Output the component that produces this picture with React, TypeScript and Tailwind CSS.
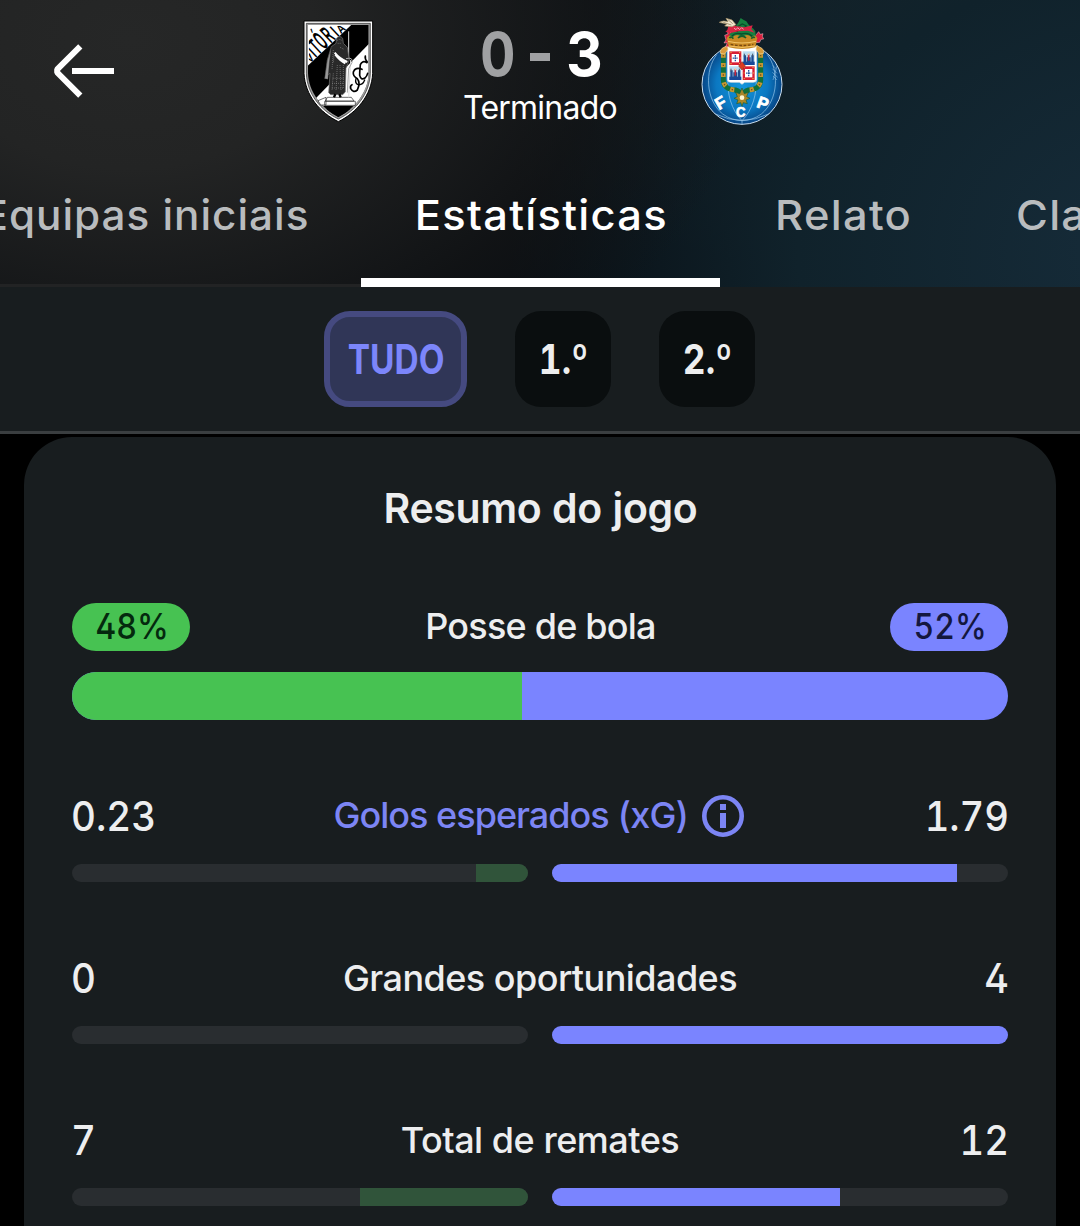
import type { ReactNode } from "react";

function BackArrow() {
  return (
    <svg className="block h-[60px] w-[66px]" viewBox="50 41 66 60" fill="none" stroke="#fff" strokeWidth="6">
      <path d="M80.3 46.3 57.200 69.3v3.2l23.100 23.2" strokeLinejoin="bevel" />
      <path d="M72 71h42" />
    </svg>
  );
}

const crestLetters = [
  { c: "V", x: 60, y: 160, h: 1.3 },
  { c: "I", x: 77, y: 144, h: 2.1 },
  { c: "T", x: 86, y: 136, h: 2.9 },
  { c: "Ó", x: 102, y: 121, h: 3.2 },
  { c: "R", x: 123, y: 101, h: 3 },
  { c: "I", x: 144, y: 82, h: 2.2 },
  { c: "A", x: 153, y: 73, h: 1.4 },
];

function VitoriaCrest() {
  return (
    <svg className="block h-[120px] w-[100px] shrink-0" viewBox="0 0 300 360">
      <defs>
        <clipPath id="vit-inner">
          <path d="M54 45H236V190C234 248 194 296 145 321C96 296 56 248 54 190Z" />
        </clipPath>
        <clipPath id="vit-corner">
          <path d="M56 47H183L56 165Z" />
        </clipPath>
      </defs>
      <path d="M42 33H248V190C245 256 200 308 145 335C90 308 45 256 42 190Z" fill="#fff" stroke="#000" strokeWidth="3" />
      <path d="M49 40H241V190C239 252 197 302 145 327C93 302 51 252 49 190Z" fill="#999" stroke="#222" strokeWidth="2" />
      <g clipPath="url(#vit-inner)">
        <path d="M50 40H240V330H50Z" fill="#000" />
        <path d="M50 40H189L50 170Z" fill="#fff" />
        <path d="M240 98L76 266L104 296H190L250 230Z" fill="#fff" />
        <g clipPath="url(#vit-corner)" fontFamily="Liberation Sans" fontWeight="700" fontSize="26" fill="#000">
          {crestLetters.map((l, i) => (
            <text key={i} transform={`translate(${l.x} ${l.y}) rotate(-43) scale(1.15 ${l.h})`}>
              {l.c}
            </text>
          ))}
        </g>
        <path d="M92 287H202L145 330Z" fill="#000" />
      </g>
      <path d="M84 272L108 262V285H92ZM112 262H184L192 273H106ZM104 274H196V286H104Z" fill="#fff" stroke="#222" strokeWidth="2" />
      <path d="M176 64V150M182 150L176 262" stroke="#ddd" strokeWidth="3" />
      <path d="M140 84Q149 74 158 85L160 100L172 112L178 150L168 175L166 246L158 254H122L116 248L120 190L112 196L105 205L112 150L124 110L138 100Z" fill="#292929" stroke="#777" strokeWidth="2" />
      <path d="M124 112L112 150L104 206L114 208L118 160Z" fill="#999" stroke="#222" strokeWidth="1" />
      <path d="M141 92q7 -7 15 0M143 100h11M130 120l-4 60M142 165l-4 78M150 165l3 78M130 190l-4 50M160 165l0 70M128 205h34M126 220h36M126 234h36M132 136l-2 24M150 112l12 6" stroke="#8a8a8a" strokeWidth="2" strokeDasharray="3 3" fill="none" />
      <path d="M134 128Q148 146 172 156M136 134Q150 152 166 160" stroke="#fff" strokeWidth="6" fill="none" />
      <path d="M168 146Q190 140 186 158L176 176L172 248" stroke="#aaa" strokeWidth="3" fill="none" />
      <path d="M136 252l-4 10M148 252l4 10" stroke="#000" strokeWidth="7" />
      <g fill="none" stroke="#000" strokeWidth="5" strokeLinecap="round">
        <path d="M226 138q-2 10 6 18M231 158q-14 -8 -20 6q-2 20 -2 32q4 16 16 8q6 -6 8 -14" />
        <path d="M216 178q-20 -8 -26 8q-2 12 12 20q10 12 0 34q-12 10 -20 -4q-2 -10 4 -12" />
        <path d="M198 206q-4 14 6 18q14 2 20 -14" strokeWidth="4" />
      </g>
    </svg>
  );
}

function CastleQuarter({ x, y }: { x: number; y: number }) {
  return (
    <g transform={`translate(${x} ${y})`}>
      <path d="M0 0H36V41H0Z" fill="#b9dcf2" />
      <path d="M0 31H36V41H0Z" fill="#17489a" />
      <path d="M3 12H10V34H3ZM26 12H33V34H26ZM12 18H24V34H12Z" fill="#1b4c94" />
      <path d="M5 7v9M30 7v9" stroke="#456" strokeWidth="3" />
      <path d="M18 8v20" stroke="#c3273b" strokeWidth="5" />
      <circle cx="18" cy="9" r="3" fill="#f0c8a0" />
    </g>
  );
}

function ArmsQuarter({ x, y }: { x: number; y: number }) {
  return (
    <g transform={`translate(${x} ${y})`}>
      <path d="M0 0H36V41H0Z" fill="#d81f35" />
      <path d="M7 8H29V33H7Z" fill="#fff" />
      <path d="M18 11v19M10 20.500h16" stroke="#2450a0" strokeWidth="4" strokeDasharray="5 2" />
      <path d="M3 3h4M29 3h4M3 37h4M29 37h4M3 20h3M31 20h3" stroke="#f3b63e" strokeWidth="3" />
    </g>
  );
}

function PortoCrest() {
  return (
    <svg className="block h-[120px] w-[100px] shrink-0" viewBox="0 0 300 360">
      <defs>
        <radialGradient id="porto-ball" cx="50%" cy="50%" r="52%">
          <stop offset="0" stopColor="#1496dc" />
          <stop offset=".62" stopColor="#0b78c2" />
          <stop offset="1" stopColor="#07407f" />
        </radialGradient>
      </defs>
      <circle cx="150" cy="223" r="120" fill="url(#porto-ball)" stroke="#c9def0" strokeWidth="3" />
      <g fill="none" stroke="#9ccbee" strokeWidth="2">
        <path d="M74 134C38 180 40 270 92 312Q120 332 150 332Q180 332 208 312C260 270 262 180 226 134" />
        <path d="M108 200C104 250 118 300 150 332C182 300 196 250 192 200" />
        <path d="M70 312Q150 350 230 312M150 332v12" />
        <path d="M242 166l10 10M241 176l14 14M241 187l16 15M243 198l12 12M255 168l-12 42" strokeWidth="1.500" />
      </g>
      <path d="M94 122V212Q96 238 130 240Q144 244 150 258Q156 244 170 240Q204 238 206 212V122" fill="none" stroke="#11703b" strokeWidth="15" />
      <path d="M94 130V212Q98 238 130 240M206 130V212Q202 238 170 240" fill="none" stroke="#c69632" strokeWidth="14" strokeDasharray="13 16" />
      <path d="M94 130V212Q98 238 130 240M206 130V212Q202 238 170 240" fill="none" stroke="#6d521f" strokeWidth="4" strokeDasharray="4 25" strokeDashoffset="-5" />
      <path d="M106 109Q150 103 194 109V208Q194 217 184 217H158L150 223L142 217H116Q106 217 106 208Z" fill="#fff" stroke="#d8dce0" strokeWidth="2" />
      <ArmsQuarter x={112} y={124} />
      <CastleQuarter x={152} y={124} />
      <CastleQuarter x={112} y={169} />
      <ArmsQuarter x={152} y={169} />
      <path d="M150 155L160 168L150 180L140 168Z" fill="#dc3b22" stroke="#8c3620" strokeWidth="2" />
      <path d="M150 234L157 251L169 247L164 260L174 265L162 270L166 281L154 278L150 289L146 278L134 281L138 270L126 265L136 260L131 247L143 251Z" fill="#a98528" stroke="#17613a" strokeWidth="2" />
      <circle cx="150" cy="263" r="7" fill="#fff8d5" />
      <path d="M85 130Q84 116 96 112L106 106L108 118L98 132ZM215 130Q216 116 204 112L194 106L192 118L202 132Z" fill="#d99b3b" stroke="#f6d99a" strokeWidth="2" />
      <path d="M98 76l10-4-2-11 11 6 6 18-10 24-12 2 5-13-10 1 6-9zM192 98l-2-21 10-12 5 8 8-2-2 8 4 8-8 1-4 9z" fill="#d91f3d" stroke="#f6c4cc" strokeWidth="1.500" />
      <path d="M113 72L124 64L138 66L132 48L140 36L146 24L154 29L163 34L170 44L184 56L190 64L192 90L108 90Z" fill="#17803f" />
      <path d="M137 50l14-8 12 6-8 8M120 78q10-12 28-6q20-6 34 8" fill="none" stroke="#0b4d2a" strokeWidth="4" />
      <path d="M109 49Q118 40 130 48L158 52L182 46L178 58L188 68L168 62L140 64L119 68L100 66L106 60Z" fill="#d82444" />
      <path d="M126 54l6 5 5-6 6 6 6-6 6 5" fill="none" stroke="#f4a5b0" strokeWidth="3" />
      <path d="M82 37Q94 30 108 35L102 25L120 30L132 44L120 50L98 48L104 42Z" fill="#f2e7cf" stroke="#a68f64" strokeWidth="2" />
      <path d="M94 37l24 8M108 29l14 12" stroke="#7b6a47" strokeWidth="2" />
      <path d="M104 84Q112 70 122 82Q134 68 150 82Q166 68 178 82Q188 70 196 84L190 112Q150 122 110 112Z" fill="#c98a24" />
      <path d="M112 84q6-6 12 2M138 84q12-12 24 0M178 86q6-8 10-2" fill="none" stroke="#165f2e" strokeWidth="5" />
      <path d="M108 94Q150 104 192 94M111 108Q150 117 189 108" fill="none" stroke="#f3c468" strokeWidth="3" />
      <path d="M116 103Q150 110 184 103" fill="none" stroke="#79480f" strokeWidth="4" strokeDasharray="8 5" />
      <g fill="#fff" stroke="#fff" strokeWidth="2" fontFamily="Liberation Sans" fontWeight="700" textAnchor="middle">
        <text transform="translate(94 293) rotate(-30)" fontSize="50">
          F
        </text>
        <text transform="translate(146 320) scale(.88 1)" fontSize="45">
          C
        </text>
        <text transform="translate(207 296) rotate(20)" fontSize="50">
          P
        </text>
      </g>
    </svg>
  );
}

function InfoIcon() {
  return (
    <svg className="block size-[42px] shrink-0" viewBox="0 0 42 42" fill="none">
      <circle cx="21" cy="21" r="18.700" stroke="#7c85f4" strokeWidth="4.600" />
      <path d="M18 9h6v6h-6zM18 18h6v15h-6z" fill="#7c85f4" />
    </svg>
  );
}

function Chip({ children, active = false }: { children: ReactNode; active?: boolean }) {
  return (
    <button
      className={
        active
          ? "flex h-24 w-[143px] items-center justify-center rounded-[26px] border-[6px] border-[#454a80] bg-[#303657] text-[#7c86fb]"
          : "flex h-24 w-24 items-center justify-center rounded-[26px] bg-[#0a0e0f] text-[#edeeef]"
      }
    >
      <span className={active ? "scale-x-[0.815] pl-[2px] text-[41px] font-bold" : "scale-x-[0.86] pl-[2px] text-[41px] font-bold"}>{children}</span>
    </button>
  );
}

type Stat = { label: string; home: string; away: string; homeFill: number; awayFill: number; info?: boolean; tracking: string };

const stats: Stat[] = [
  { label: "Golos esperados (xG)", home: "0.23", away: "1.79", homeFill: 52, awayFill: 405, info: true, tracking: "tracking-[-1px]" },
  { label: "Grandes oportunidades", home: "0", away: "4", homeFill: 0, awayFill: 456, tracking: "tracking-[-0.55px]" },
  { label: "Total de remates", home: "7", away: "12", homeFill: 168, awayFill: 288, tracking: "tracking-[-0.5px]" },
];

function StatRow({ s }: { s: Stat }) {
  return (
    <div className="h-[162px] shrink-0">
      <div className="flex h-24 items-center justify-between">
        <span className="-ml-px w-[121px] origin-left scale-x-[0.94] text-[41px] font-[450]">{s.home}</span>
        <span className={s.info ? "flex items-center gap-[14px] pr-[2px] text-[#7c85f4]" : "flex items-center"}>
          <span className={`text-[36px] font-medium ${s.info ? "pb-[2px]" : ""} ${s.tracking}`}>{s.label}</span>
          {s.info && <InfoIcon />}
        </span>
        <span className="-mr-px w-[121px] origin-right scale-x-[0.93] text-right text-[41px] font-[450]">{s.away}</span>
      </div>
      <div className="flex gap-6">
        <div className="flex h-[18px] flex-1 justify-end overflow-hidden rounded-full bg-[#292d30]">
          <div className="bg-[#30543a]" style={{ width: s.homeFill }} />
        </div>
        <div className="flex h-[18px] flex-1 overflow-hidden rounded-full bg-[#292d30]">
          <div className="bg-[#7a84ff]" style={{ width: s.awayFill }} />
        </div>
      </div>
    </div>
  );
}

export default function App() {
  return (
    <div className="flex h-[1226px] w-[1080px] flex-col overflow-hidden bg-black font-['Inter',sans-serif] leading-none whitespace-nowrap text-[#edeeef] [font-feature-settings:'tnum','cv02']">
      <header className="flex h-[287px] shrink-0 flex-col bg-[#080d12] bg-[radial-gradient(ellipse_620px_430px_at_130px_40px,#262727_0%,#232424_30%,rgba(20,21,22,0.7)_75%,transparent_100%),radial-gradient(ellipse_640px_520px_at_1150px_250px,#162c3a_0%,#10222b_55%,transparent_100%),radial-gradient(ellipse_700px_300px_at_1080px_0px,#212c30_0%,#14212780_55%,transparent_100%)]">
        <div className="flex h-[143px] pt-[10px]">
          <div className="w-[290px] pt-[31px] pl-[50px]">
            <BackArrow />
          </div>
          <VitoriaCrest />
          <div className="flex w-[302px] flex-col items-center pt-[17px]">
            <div className="flex h-[54px] items-center pl-px text-[61px] font-bold text-white">
              <span className="w-[34px] text-center text-[#a0a1a3]">
                <span className="-mx-4 inline-block scale-x-[0.9]">0</span>
              </span>
              <span className="mr-[18px] ml-[15px] mt-[5px] h-2 w-5 bg-[#a0a1a3]" />
              <span className="w-[34px] text-center">
                <span className="-mx-4 inline-block scale-x-[0.93]">3</span>
              </span>
            </div>
            <span className="flex h-[54px] items-center pr-[2px] text-[32px] tracking-[-0.75px] text-white">Terminado</span>
          </div>
          <PortoCrest />
        </div>
        <nav className="-ml-[61px] flex h-36 w-[1141px] overflow-hidden text-[41px] font-medium tracking-[1.2px] text-[#b9bcbe]">
          <div className="flex w-[422px] shrink-0 items-center justify-end border-b-[3px] border-[#222324] pt-[3px] pr-[52px]">
            <span className="origin-right scale-x-[1.03] tracking-[0.95px]">Equipas iniciais</span>
          </div>
          <div className="flex w-[359px] shrink-0 items-center justify-center border-b-[9px] border-white pt-[9px] pl-px text-white">
            <span className="scale-x-[1.06]">Estatísticas</span>
          </div>
          <div className="flex w-[242px] shrink-0 items-center justify-center pl-[5px]">
            <span className="scale-x-[1.06]">Relato</span>
          </div>
          <div className="flex shrink-0 items-center pl-[54px]">
            <span className="origin-left scale-x-[1.06]">Classificação</span>
          </div>
        </nav>
      </header>

      <div className="flex h-[147px] shrink-0 items-center justify-center gap-12 border-b-[3px] border-[#3a3e40] bg-[#181d1f] pr-px">
        <Chip active>TUDO</Chip>
        <Chip>1.º</Chip>
        <Chip>2.º</Chip>
      </div>

      <main className="mx-6 mt-[3px] flex min-h-0 flex-1 flex-col overflow-hidden rounded-t-[48px] bg-[#181d1f] px-12">
        <h2 className="flex h-[142px] shrink-0 items-center justify-center pl-px text-[41px] font-semibold tracking-[-0.35px]">Resumo do jogo</h2>
        <section className="mt-6 shrink-0">
          <div className="flex h-12 items-center justify-between text-[36px] font-medium">
            <span className="flex h-12 w-[118px] items-center justify-center rounded-full bg-[#47c252] pb-[2px] pl-[3px] text-[#04290e]">
              <span className="scale-x-[0.89]">48%</span>
            </span>
            <span className="pb-[2px] pl-px tracking-[-0.8px]">Posse de bola</span>
            <span className="flex h-12 w-[118px] items-center justify-center rounded-full bg-[#7a84ff] pb-[2px] pl-[2px] text-[#14173f]">
              <span className="scale-x-[0.89]">52%</span>
            </span>
          </div>
          <div className="mt-[21px] flex h-12 overflow-hidden rounded-full bg-[#7a84ff]">
            <div className="w-[450px] bg-[#47c252]" />
          </div>
        </section>
        <section className="mt-12">
          {stats.map((s) => (
            <StatRow key={s.label} s={s} />
          ))}
        </section>
      </main>
    </div>
  );
}
